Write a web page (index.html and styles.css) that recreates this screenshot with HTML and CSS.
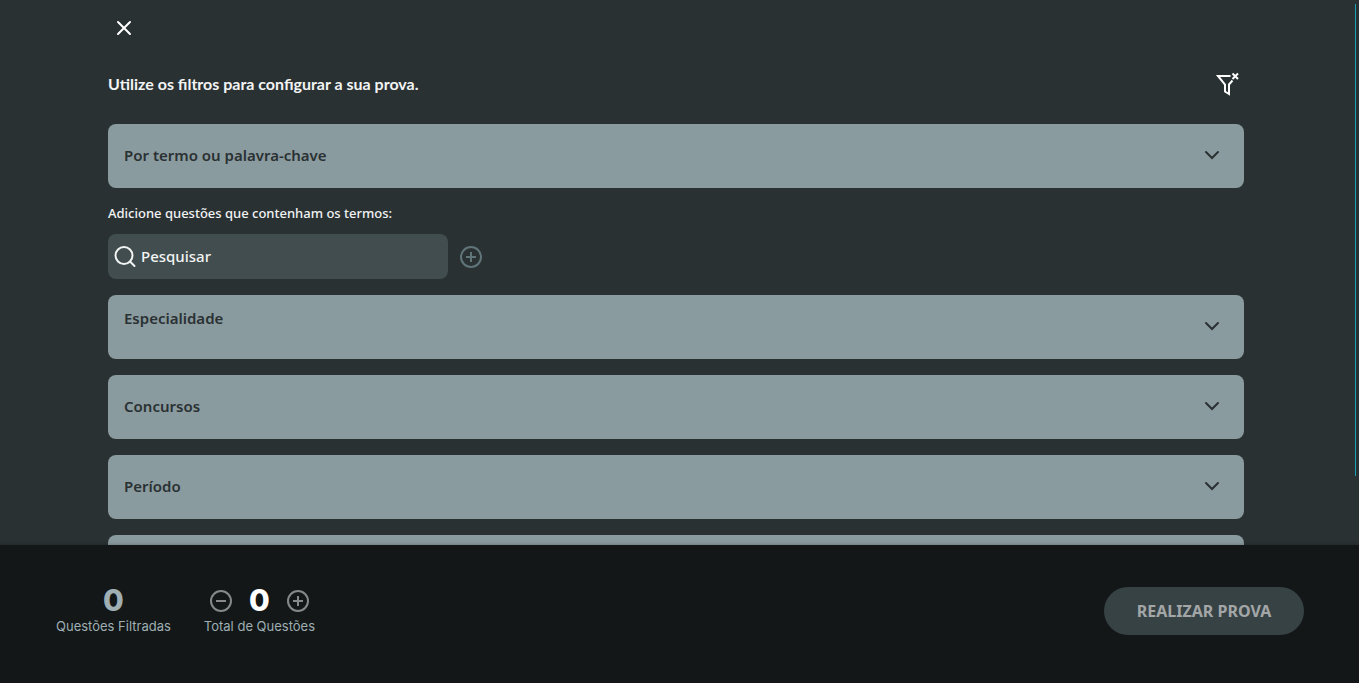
FILE: index.html
```html
<!DOCTYPE html>
<html lang="pt-BR">
<head>
<meta charset="utf-8">
<meta name="viewport" content="width=device-width, initial-scale=1">
<title>Prova</title>
<link rel="stylesheet" href="styles.css">
</head>
<body>
<svg class="defs" width="0" height="0" aria-hidden="true">
  <symbol id="chevron" viewBox="0 0 24 24"><path d="M6 9l6 6 6-6" stroke-linecap="round"/></symbol>
  <symbol id="plus" viewBox="0 0 24 24"><circle cx="12" cy="12" r="10"/><path d="M12 7v10M7 12h10"/></symbol>
  <symbol id="minus" viewBox="0 0 24 24"><circle cx="12" cy="12" r="10"/><path d="M7 12h10"/></symbol>
</svg>
<main class="content">
  <button class="icon-button close" type="button">
    <svg class="icon" viewBox="0 0 24 24"><path d="M6 6l12 12M18 6L6 18" stroke-linecap="round"/></svg>
  </button>
  <div class="heading">
    <h1 class="title">Utilize os filtros para configurar a sua prova.</h1>
    <button class="icon-button" type="button">
      <svg class="icon" viewBox="0 0 24 24"><path d="M15.500 4H3l7 8.500v7l4 2.500v-9.500l3.500-4"/><path d="M17.500 1.500l5.500 5.500M23 1.500L17.500 7"/></svg>
    </button>
  </div>
  <button class="panel" type="button"><span>Por termo ou palavra-chave</span><svg class="icon"><use href="#chevron"/></svg></button>
  <section class="terms">
    <label class="terms-label" for="term">Adicione questões que contenham os termos:</label>
    <div class="search-row">
      <div class="search">
        <svg class="icon" viewBox="0 0 24 24"><circle cx="11" cy="10.500" r="8.500"/><path d="M17 16.500l4.500 4.500" stroke-linecap="round"/></svg>
        <input class="search-input" id="term" type="text" placeholder="Pesquisar">
      </div>
      <button class="icon-button add" type="button"><svg class="icon"><use href="#plus"/></svg></button>
    </div>
  </section>
  <div class="panels">
    <button class="panel panel-top" type="button"><span>Especialidade</span><svg class="icon"><use href="#chevron"/></svg></button>
    <button class="panel" type="button"><span>Concursos</span><svg class="icon"><use href="#chevron"/></svg></button>
    <button class="panel" type="button"><span>Período</span><svg class="icon"><use href="#chevron"/></svg></button>
    <button class="panel" type="button"><span></span><svg class="icon"><use href="#chevron"/></svg></button>
  </div>
  <div class="scroll-thumb"></div>
</main>
<footer class="footer">
  <div class="stats">
    <div class="stat">
      <strong class="count muted">0</strong>
      <span class="caption">Questões Filtradas</span>
    </div>
    <div class="stat">
      <div class="stepper">
        <button class="icon-button step" type="button"><svg class="icon"><use href="#minus"/></svg></button>
        <strong class="count">0</strong>
        <button class="icon-button step" type="button"><svg class="icon"><use href="#plus"/></svg></button>
      </div>
      <span class="caption">Total de Questões</span>
    </div>
  </div>
  <button class="submit" type="button">REALIZAR PROVA</button>
</footer>
</body>
</html>
```
FILE: styles.css
```css
* { box-sizing: border-box; }
body {
  margin: 0;
  height: 100vh;
  display: flex;
  flex-direction: column;
  background: #2a3133;
  color: #f2f4f4;
  font-family: "Noto Sans", "Open Sans", sans-serif;
}
button { font: inherit; border: 0; cursor: pointer; }
.defs { position: absolute; }
.icon {
  display: block;
  flex: none;
  width: 24px;
  height: 24px;
  fill: none;
  stroke: currentColor;
  stroke-width: 2;
}
.icon-button { padding: 0; background: none; color: #fff; }
.content {
  position: relative;
  flex: 1;
  min-height: 0;
  overflow: hidden;
  padding: 12px 115px 0 108px;
}
.close { display: block; padding: 4px; }
.heading {
  display: flex;
  align-items: center;
  justify-content: space-between;
  margin: 16px 5px 16px 0;
  height: 48px;
}
.title {
  margin: 0;
  font-family: Lato, "Noto Sans", sans-serif;
  font-size: 16px;
  font-weight: 700;
  line-height: 24px;
}
.panel {
  display: flex;
  align-items: center;
  justify-content: space-between;
  width: 100%;
  height: 64px;
  padding: 11px 20px 13px 16px;
  border-radius: 8px;
  background: #8a9b9f;
  color: #2a3133;
  font-size: 15px;
  font-weight: 600;
  line-height: 24px;
}
.panel-top span { align-self: flex-start; }
.terms { padding: 15px 0 16px; }
.terms-label {
  display: block;
  font-size: 13px;
  font-weight: 500;
  line-height: 20px;
}
.search-row { display: flex; align-items: center; gap: 11px; margin-top: 11px; }
.search {
  display: flex;
  align-items: center;
  gap: 4px;
  width: 340px;
  height: 45px;
  padding: 0 5px;
  border-radius: 8px;
  background: #414d4e;
}
.search-input {
  flex: 1;
  min-width: 0;
  padding: 0 0 2px;
  border: 0;
  outline: 0;
  background: none;
  color: #f2f4f4;
  font: 500 15px/24px "Noto Sans", "Open Sans", sans-serif;
}
.search-input::placeholder { color: #f2f4f4; opacity: 1; }
.add { color: #60757a; }
.panels { display: flex; flex-direction: column; gap: 16px; }
.scroll-thumb {
  position: absolute;
  top: 4px;
  right: 3px;
  width: 1px;
  height: 472px;
  background: #169fb5;
}
.footer {
  position: relative;
  display: flex;
  align-items: center;
  justify-content: space-between;
  height: 138px;
  padding: 0 55px 6px 56px;
  border-bottom: 1px solid #17121a;
  background: #131718;
  box-shadow: 0 0 4px rgba(0, 0, 0, 0.3);
}
.stats { display: flex; gap: 33px; }
.stat { display: flex; flex-direction: column; align-items: center; }
.stepper { display: flex; align-items: center; gap: 16px; }
.step { color: #868889; }
.count {
  font-family: Inter, "Noto Sans", sans-serif;
  font-size: 30px;
  font-weight: 800;
  line-height: 31px;
  color: #fff;
}
.muted { color: #9fafb3; }
.caption {
  font-family: Inter, "Noto Sans", sans-serif;
  font-size: 13px;
  line-height: 20px;
  color: #9fafb3;
}
.submit {
  width: 200px;
  height: 48px;
  border-radius: 24px;
  background: #374245;
  color: #a3a6a7;
  font-size: 16px;
  font-weight: 700;
}
```
